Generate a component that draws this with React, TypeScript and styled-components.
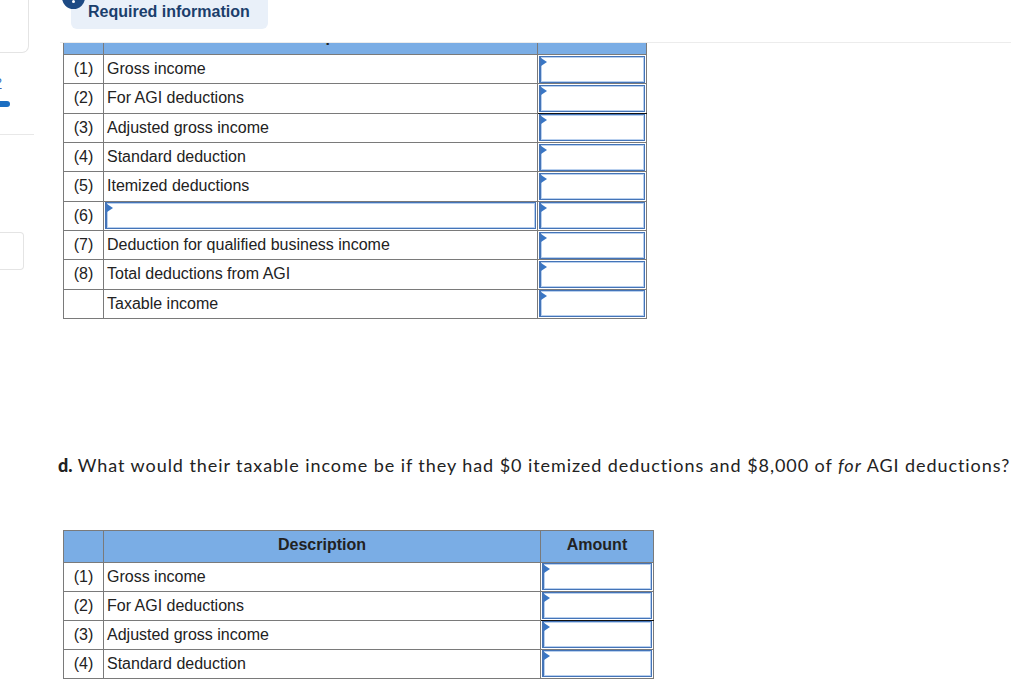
import React from "react";
import styled, { createGlobalStyle } from "styled-components";

type Row = { num?: string; label?: string; input?: boolean; dark?: boolean };

const firstRows: Row[] = [
  { num: "(1)", label: "Gross income" },
  { num: "(2)", label: "For AGI deductions", dark: true },
  { num: "(3)", label: "Adjusted gross income" },
  { num: "(4)", label: "Standard deduction" },
  { num: "(5)", label: "Itemized deductions" },
  { num: "(6)", input: true },
  { num: "(7)", label: "Deduction for qualified business income" },
  { num: "(8)", label: "Total deductions from AGI" },
  { label: "Taxable income" },
];

const secondRows: Row[] = [
  { num: "(1)", label: "Gross income" },
  { num: "(2)", label: "For AGI deductions", dark: true },
  { num: "(3)", label: "Adjusted gross income" },
  { num: "(4)", label: "Standard deduction" },
];

const AnswerTable = ({
  rows,
  widths,
  rowHeight,
}: {
  rows: Row[];
  widths: number[];
  rowHeight: number;
}) => (
  <Table $rowH={rowHeight} style={{ width: widths.reduce((a, b) => a + b, 0) }}>
    <colgroup>
      {widths.map((w, i) => (
        <col key={i} style={{ width: w }} />
      ))}
    </colgroup>
    <thead>
      <tr>
        <HeadCell />
        <HeadCell>Description</HeadCell>
        <HeadCell>Amount</HeadCell>
      </tr>
    </thead>
    <tbody>
      {rows.map((r, i) => (
        <tr key={i}>
          <NumCell>{r.num}</NumCell>
          <DescCell>
            {r.input ? (
              <InputBox $wide>
                <Marker />
              </InputBox>
            ) : (
              r.label
            )}
          </DescCell>
          <AmountCell $dark={r.dark}>
            <InputBox>
              <Marker />
            </InputBox>
          </AmountCell>
        </tr>
      ))}
    </tbody>
  </Table>
);

const App = () => {
  return (
    <Page>
      <GlobalStyle />
      <Sidebar>
        <TopCard />
        <HelpLink>?</HelpLink>
        <Bar />
        <SideLine />
        <SideBox />
      </Sidebar>
      <Main>
        <Header>
          <Badge>
            <BadgeDot />
          </Badge>
          <Pill>Required information</Pill>
        </Header>
        <Clip>
          <ClippedTable>
            <AnswerTable rows={firstRows} widths={[40, 434, 109]} rowHeight={28.33} />
          </ClippedTable>
        </Clip>
        <Question>
          <b>d.</b> What would their taxable income be if they had $0 itemized
          deductions and $8,000 of <i>for</i> AGI deductions?
        </Question>
        <SecondWrap>
          <AnswerTable rows={secondRows} widths={[40, 437, 113]} rowHeight={28} />
        </SecondWrap>
      </Main>
    </Page>
  );
};

export default App;

const GlobalStyle = createGlobalStyle`
  body {
    margin: 0;
    background: #fff;
    font-family: "Liberation Sans", Arial, sans-serif;
    color: #222;
  }
`;

const Page = styled.div`
  display: flex;
  width: 1011px;
  height: 680px;
  overflow: hidden;
`;

const Sidebar = styled.div`
  width: 34px;
  flex-shrink: 0;
  display: flex;
  flex-direction: column;
  overflow: hidden;
`;

const TopCard = styled.div`
  width: 29px;
  height: 63px;
  margin-top: -10px;
  box-sizing: border-box;
  border: 1px solid #e4e4e4;
  border-left: none;
  border-radius: 0 0 7px 0;
`;

const HelpLink = styled.div`
  margin-top: 24px;
  margin-left: -5px;
  font-size: 12px;
  line-height: 12px;
  color: #2a6cc0;
  text-decoration: underline;
`;

const Bar = styled.div`
  margin-top: 12px;
  width: 10px;
  height: 6px;
  background: #1b6ec2;
  border-radius: 0 3px 3px 0;
`;

const SideLine = styled.div`
  margin-top: 27px;
  height: 1px;
  background: #e8e8e8;
`;

const SideBox = styled.div`
  margin-top: 97px;
  width: 24px;
  height: 38px;
  box-sizing: border-box;
  border: 1px solid #e4e4e4;
  border-left: none;
  border-radius: 0 4px 4px 0;
`;

const Main = styled.div`
  flex: 1;
  min-width: 0;
  padding-left: 24px;
  display: flex;
  flex-direction: column;
`;

const Header = styled.div`
  position: relative;
  height: 42px;
`;

const Badge = styled.div`
  position: absolute;
  left: 4px;
  top: -14px;
  width: 23px;
  height: 23px;
  border-radius: 50%;
  background: #1d4a84;
  display: flex;
  justify-content: center;
  align-items: flex-end;
`;

const BadgeDot = styled.div`
  width: 3px;
  height: 3px;
  margin-bottom: 6px;
  border-radius: 50%;
  background: #fff;
`;

const Pill = styled.div`
  margin-left: 13px;
  width: 197px;
  height: 29px;
  box-sizing: border-box;
  padding: 1px 0 0 17px;
  background: #e9f0f9;
  border-radius: 0 0 6px 6px;
  font-size: 16px;
  font-weight: bold;
  line-height: 22px;
  color: #1b3e6c;
`;

const Clip = styled.div`
  margin-left: 2px;
  border-top: 1px solid #ececec;
  overflow: hidden;
`;

const ClippedTable = styled.div`
  margin-top: -21px;
  margin-left: 3px;
  padding-bottom: 2px;
`;

const SecondWrap = styled.div`
  margin-top: 53px;
  margin-left: 5px;
`;

const Question = styled.div`
  margin-top: 132px;
  font-family: Lato, "Open Sans", sans-serif;
  font-size: 18px;
  line-height: 24px;
  letter-spacing: 0.93px;
  color: #222;
  white-space: nowrap;
  b {
    font-weight: 900;
    letter-spacing: 0;
  }
`;

const Table = styled.table<{ $rowH: number }>`
  border-collapse: collapse;
  table-layout: fixed;
  font-size: 16px;
  color: #222;
  tbody td {
    height: ${(p) => p.$rowH}px;
  }
`;

const HeadCell = styled.th`
  height: 28px;
  padding: 0 0 3px;
  background: #7aade5;
  border: 1px solid #7a7a7a;
  font-size: 16px;
  font-weight: bold;
  color: #222;
  text-align: center;
  vertical-align: middle;
`;

const NumCell = styled.td`
  padding: 0;
  border: 1px solid #7a7a7a;
  text-align: center;
  vertical-align: middle;
`;

const DescCell = styled.td`
  padding: 0 3px;
  border: 1px solid #7a7a7a;
  vertical-align: middle;
  white-space: nowrap;
`;

const AmountCell = styled.td<{ $dark?: boolean }>`
  padding: 0;
  border: 1px solid #7a7a7a;
  border-bottom-color: ${(p) => (p.$dark ? "#111" : "#7a7a7a")};
  vertical-align: middle;
`;

const InputBox = styled.div<{ $wide?: boolean }>`
  position: relative;
  height: 27px;
  margin: 0 ${(p) => (p.$wide ? "-2px" : "1px")};
  box-sizing: border-box;
  border: 1px solid #4474b8;
  border-left-width: 2px;
  box-shadow: inset 0 0 0 1px #b9d0ee;
  background: #fff;
`;

const Marker = styled.div`
  position: absolute;
  left: 0;
  top: 1px;
  width: 0;
  height: 0;
  border-left: 6px solid #3a76c4;
  border-top: 4px solid transparent;
  border-bottom: 4px solid transparent;
`;
